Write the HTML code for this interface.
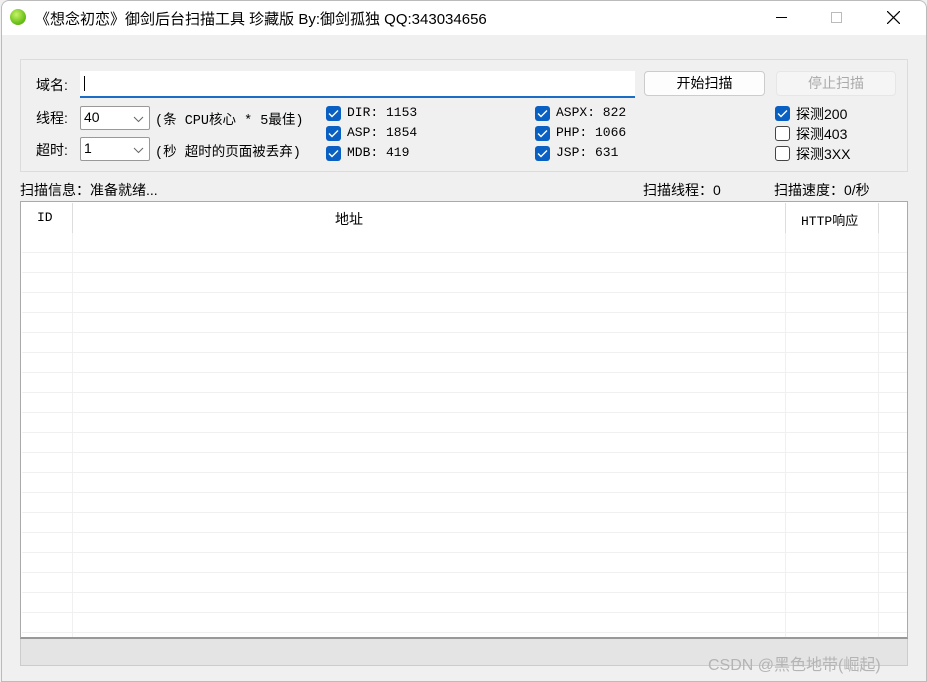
<!DOCTYPE html>
<html><head><meta charset="utf-8"><style>
*{margin:0;padding:0;box-sizing:border-box}
body{width:927px;height:682px;background:#fff;overflow:hidden;position:relative;font-family:"Liberation Sans","Noto Sans CJK SC",sans-serif;font-size:14px;color:#000}
.win{position:absolute;left:0;top:0;width:927px;height:682px;background:#f0f0f0}
.frame{position:absolute;left:1px;top:0;width:926px;height:682px;border:1px solid #bbb;border-radius:8px 8px 0 0;pointer-events:none}
.title{position:absolute;left:1px;top:0;width:926px;height:35px;background:#fff;border-radius:8px 8px 0 0}
.a{position:absolute;white-space:nowrap}
.mono{font-family:"Liberation Mono","Noto Sans CJK SC",monospace;font-size:13px}
.cb{position:absolute;width:15px;height:15px;border-radius:3px;background:#0a5fc2}
.cb svg{position:absolute;left:2px;top:3px}
.cbe{position:absolute;width:15px;height:15px;border-radius:3px;border:1px solid #444;background:#fff}
.sel{position:absolute;width:70px;height:24px;background:#fff;border:1px solid #999;border-radius:2px}
.btn{position:absolute;height:25px;border-radius:4px;text-align:center;line-height:23px}
.row{position:absolute;left:22px;width:885px;height:1px;background:#f0f0f0}
</style></head><body>
<div class="win">
<div class="title">
 <div class="a" style="left:9px;top:9px;width:16px;height:16px;border-radius:50%;background:radial-gradient(circle at 40% 35%,#c8f26a,#6cc21a 60%,#4c9b10)"></div>
 <div class="a" style="left:34px;top:8px;font-size:15px">《想念初恋》御剑后台扫描工具 珍藏版 By:御剑孤独 QQ:343034656</div>
 <div class="a" style="left:775px;top:17px;width:11px;height:1px;background:#000"></div>
 <div class="a" style="left:830px;top:12px;width:11px;height:11px;border:1px solid #bbb"></div>
 <svg class="a" style="left:886px;top:11px" width="13" height="13"><path d="M0 0L13 13M13 0L0 13" stroke="#000" stroke-width="1.2"/></svg>
</div>
<div class="a" style="left:20px;top:59px;width:888px;height:113px;border:1px solid #dcdcdc"></div>
<div class="a" style="left:36px;top:75px">域名:</div>
<div class="a" style="left:80px;top:71px;width:555px;height:27px;background:#fff;border-bottom:2px solid #1a6cc4"></div>
<div class="a" style="left:84px;top:76px;width:1px;height:15px;background:#000"></div>
<div class="btn a" style="left:644px;top:71px;width:121px;background:#fdfdfd;border:1px solid #ccc">开始扫描</div>
<div class="btn a" style="left:776px;top:71px;width:120px;background:#f5f5f5;border:1px solid #e6e6e6;color:#aaa">停止扫描</div>
<div class="a" style="left:36px;top:108px">线程:</div>
<div class="sel" style="left:80px;top:106px"></div><div class="a" style="left:84px;top:109px">40</div>
<svg class="a" style="left:133px;top:116px" width="11" height="7"><path d="M1 1L5.5 5.5L10 1" stroke="#666" fill="none"/></svg>
<div class="a mono" style="left:155px;top:108px;font-size:13.5px">(条 CPU核心 * 5最佳)</div>
<div class="a" style="left:36px;top:140px">超时:</div>
<div class="sel" style="left:80px;top:137px"></div><div class="a" style="left:84px;top:140px">1</div>
<svg class="a" style="left:133px;top:147px" width="11" height="7"><path d="M1 1L5.5 5.5L10 1" stroke="#666" fill="none"/></svg>
<div class="a mono" style="left:155px;top:140px;font-size:13.5px">(秒 超时的页面被丢弃)</div>

<div class="cb" style="left:326px;top:106px"><svg width="11" height="9"><path d="M1 4.5L4 7.5L10 1.5" stroke="#fff" stroke-width="1.4" fill="none"/></svg></div><div class="a mono" style="left:347px;top:105px">DIR: 1153</div>
<div class="cb" style="left:326px;top:126px"><svg width="11" height="9"><path d="M1 4.5L4 7.5L10 1.5" stroke="#fff" stroke-width="1.4" fill="none"/></svg></div><div class="a mono" style="left:347px;top:125px">ASP: 1854</div>
<div class="cb" style="left:326px;top:146px"><svg width="11" height="9"><path d="M1 4.5L4 7.5L10 1.5" stroke="#fff" stroke-width="1.4" fill="none"/></svg></div><div class="a mono" style="left:347px;top:145px">MDB: 419</div>
<div class="cb" style="left:535px;top:106px"><svg width="11" height="9"><path d="M1 4.5L4 7.5L10 1.5" stroke="#fff" stroke-width="1.4" fill="none"/></svg></div><div class="a mono" style="left:556px;top:105px">ASPX: 822</div>
<div class="cb" style="left:535px;top:126px"><svg width="11" height="9"><path d="M1 4.5L4 7.5L10 1.5" stroke="#fff" stroke-width="1.4" fill="none"/></svg></div><div class="a mono" style="left:556px;top:125px">PHP: 1066</div>
<div class="cb" style="left:535px;top:146px"><svg width="11" height="9"><path d="M1 4.5L4 7.5L10 1.5" stroke="#fff" stroke-width="1.4" fill="none"/></svg></div><div class="a mono" style="left:556px;top:145px">JSP: 631</div>
<div class="cb" style="left:775px;top:106px"><svg width="11" height="9"><path d="M1 4.5L4 7.5L10 1.5" stroke="#fff" stroke-width="1.4" fill="none"/></svg></div><div class="a" style="left:796px;top:104px">探测200</div>
<div class="cbe" style="left:775px;top:126px"></div><div class="a" style="left:796px;top:124px">探测403</div>
<div class="cbe" style="left:775px;top:146px"></div><div class="a" style="left:796px;top:144px">探测3XX</div>

<div class="a" style="left:20px;top:180px">扫描信息：准备就绪...</div>
<div class="a" style="left:643px;top:180px">扫描线程：0</div>
<div class="a" style="left:774px;top:180px">扫描速度：0/秒</div>

<div class="a" style="left:20px;top:201px;width:888px;height:438px;background:#fff;border:1px solid #aaa;border-bottom:2px solid #999"></div>
<div class="a" style="left:72px;top:203px;width:1px;height:434px;background:#f0f0f0"></div>
<div class="a" style="left:785px;top:203px;width:1px;height:434px;background:#f0f0f0"></div>
<div class="a" style="left:878px;top:203px;width:1px;height:434px;background:#f0f0f0"></div>
<div class="a" style="left:72px;top:203px;width:1px;height:30px;background:#ddd"></div>
<div class="a" style="left:785px;top:203px;width:1px;height:30px;background:#ddd"></div>
<div class="a" style="left:878px;top:203px;width:1px;height:30px;background:#ddd"></div>
<div class="a mono" style="left:37px;top:210px">ID</div>
<div class="a" style="left:335px;top:209px">地址</div>
<div class="a mono" style="left:801px;top:210px">HTTP响应</div>
<div class="row" style="top:252px"></div><div class="row" style="top:272px"></div><div class="row" style="top:292px"></div><div class="row" style="top:312px"></div><div class="row" style="top:332px"></div><div class="row" style="top:352px"></div><div class="row" style="top:372px"></div><div class="row" style="top:392px"></div><div class="row" style="top:412px"></div><div class="row" style="top:432px"></div><div class="row" style="top:452px"></div><div class="row" style="top:472px"></div><div class="row" style="top:492px"></div><div class="row" style="top:512px"></div><div class="row" style="top:532px"></div><div class="row" style="top:552px"></div><div class="row" style="top:572px"></div><div class="row" style="top:592px"></div><div class="row" style="top:612px"></div><div class="row" style="top:632px"></div>
<div class="a" style="left:20px;top:639px;width:888px;height:27px;background:#e4e4e4;border:1px solid #ccc;border-top:none"></div>
<div class="a" style="left:708px;top:651px;color:#b4b4b4;font-size:16px">CSDN @黑色地带(崛起)</div>
<div class="frame"></div>
</div>
</body></html>
